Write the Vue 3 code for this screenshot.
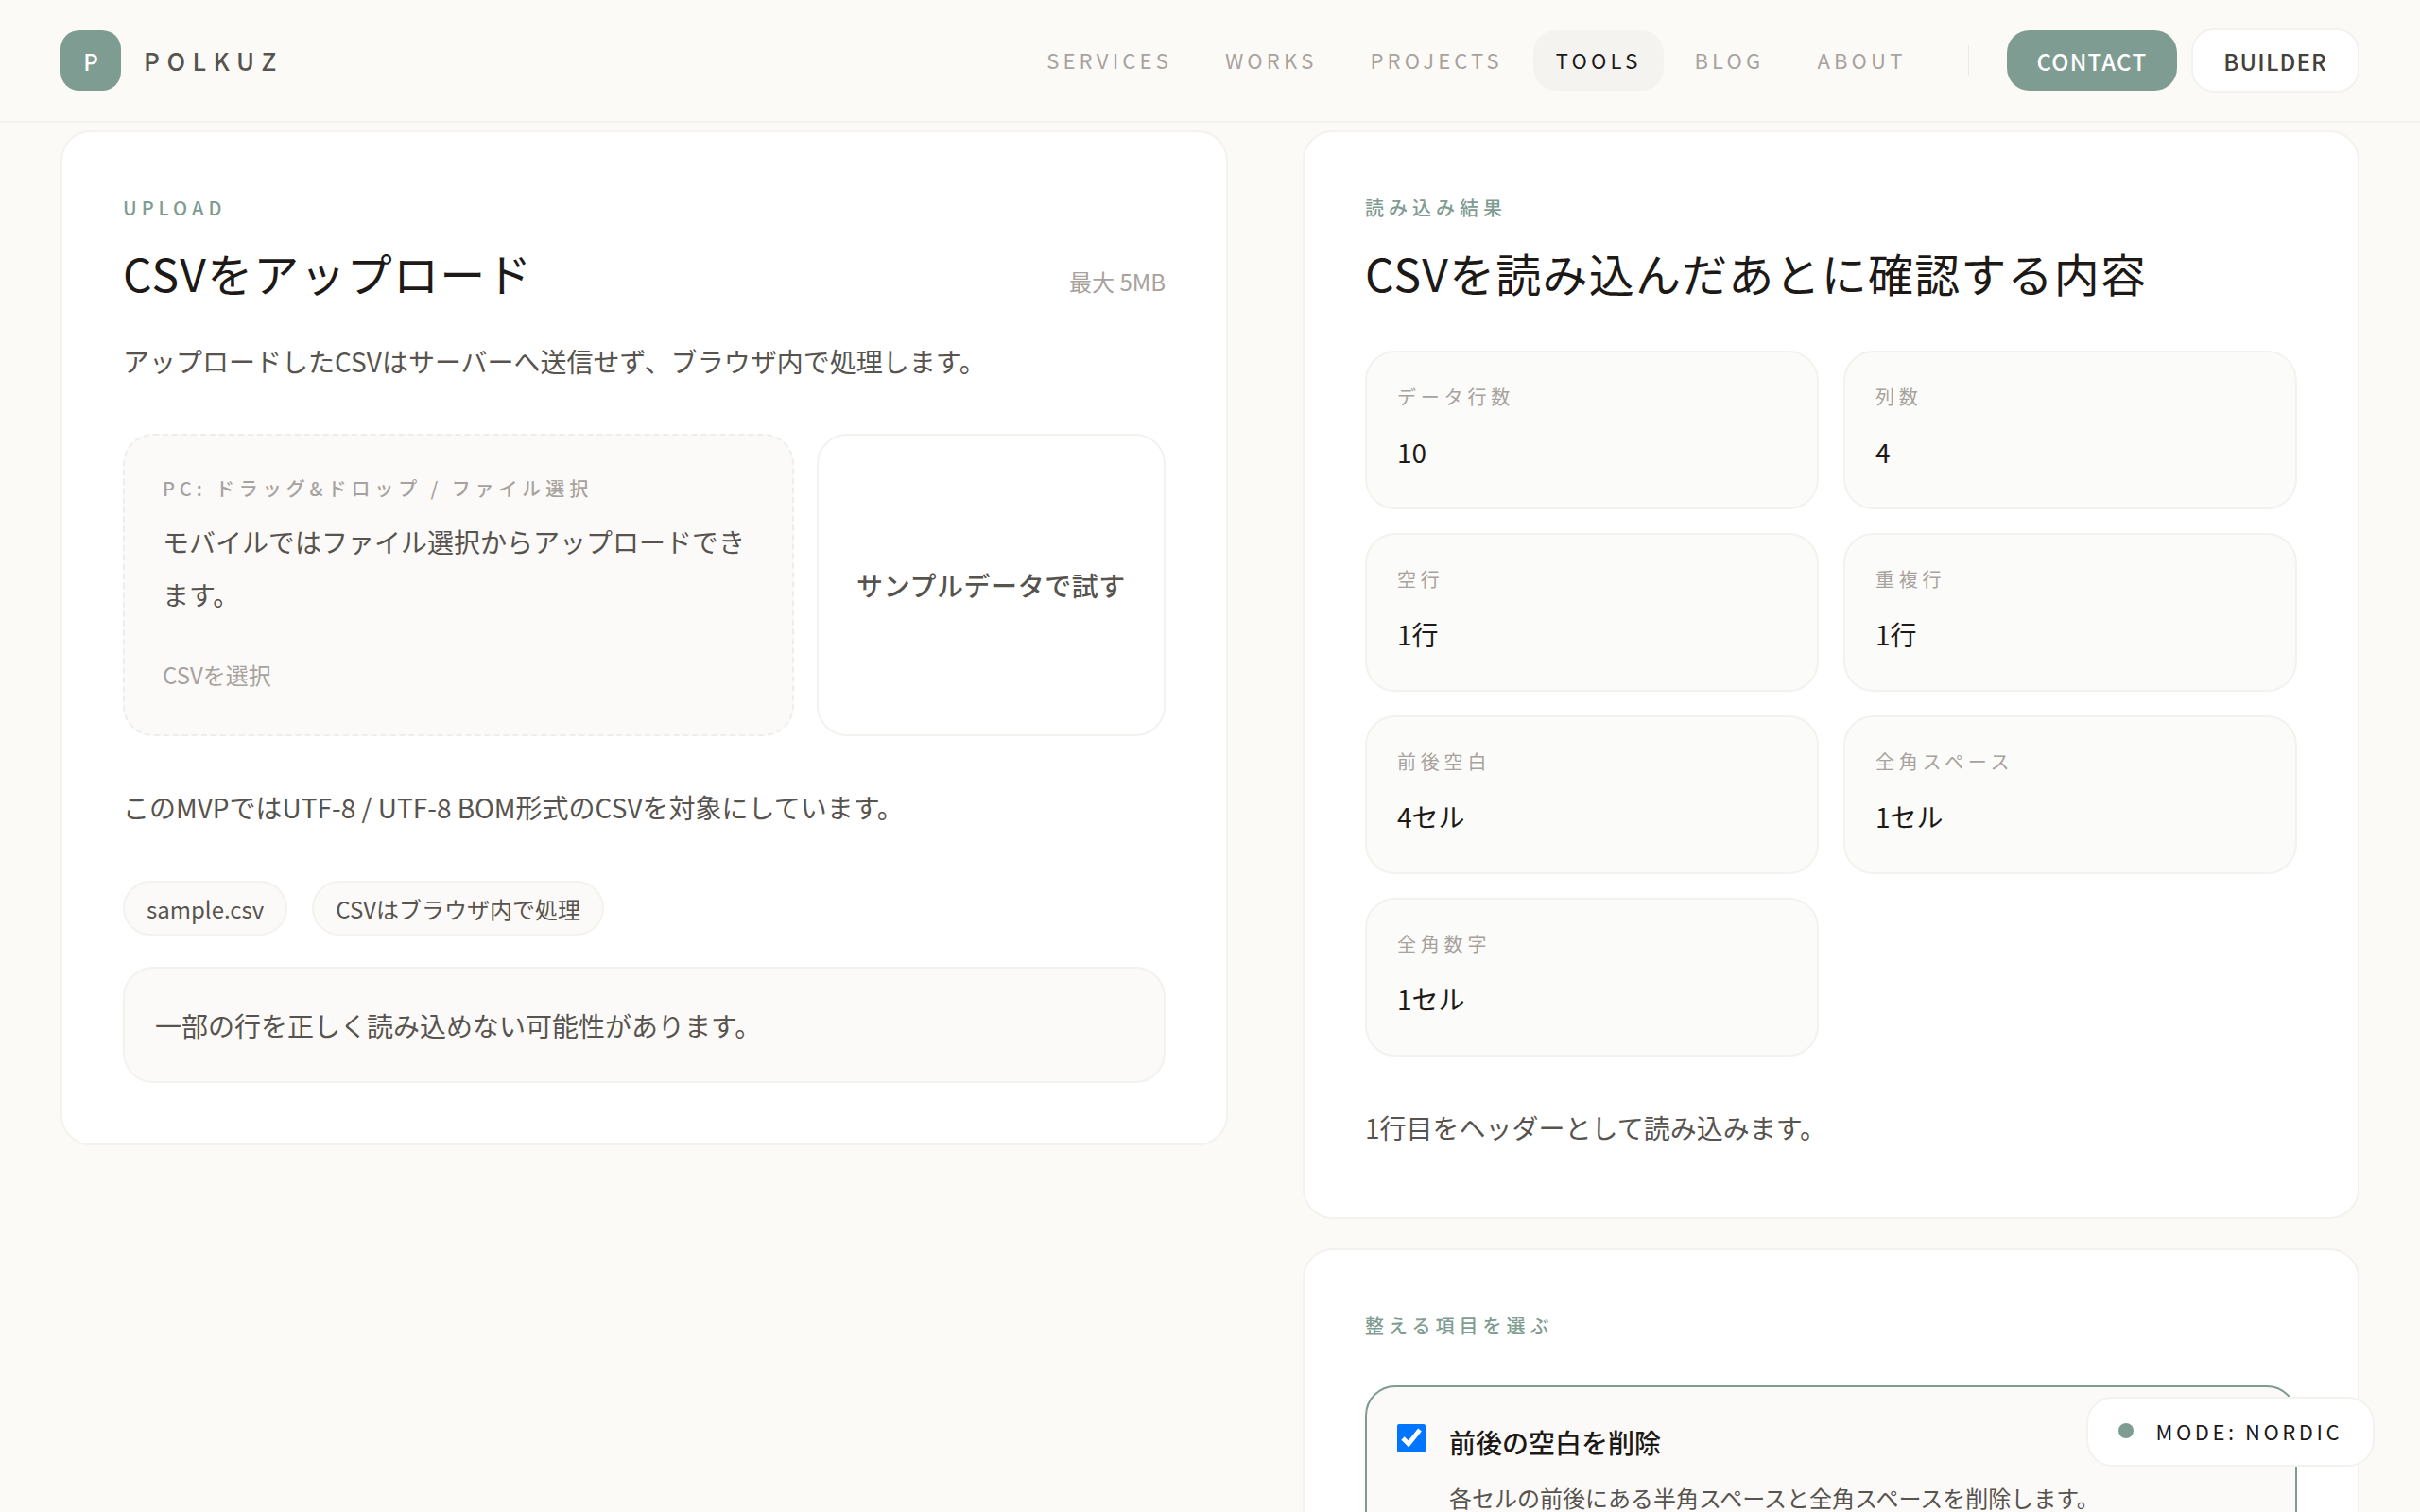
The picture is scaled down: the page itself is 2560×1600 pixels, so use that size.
<template>
  <div class="page">
    <header class="site-header">
      <div class="brand">
        <span class="brand-mark">P</span>
        <span class="brand-name">POLKUZ</span>
      </div>
      <div class="header-right">
        <nav class="nav">
          <a v-for="item in navItems" :key="item" class="nav-link" :class="{ active: item === 'TOOLS' }">{{ item }}</a>
        </nav>
        <span class="nav-divider"></span>
        <a class="btn btn-contact">CONTACT</a>
        <a class="btn btn-builder">BUILDER</a>
      </div>
    </header>

    <main class="layout">
      <section class="card upload-card">
        <p class="eyebrow">UPLOAD</p>
        <div class="title-row">
          <h2 class="card-title">CSVをアップロード</h2>
          <span class="limit">最大 5MB</span>
        </div>
        <p class="body-text lead">アップロードしたCSVはサーバーへ送信せず、ブラウザ内で処理します。</p>

        <div class="upload-row">
          <div class="dropzone">
            <p class="drop-label">PC: ドラッグ&amp;ドロップ / ファイル選択</p>
            <p class="drop-text">モバイルではファイル選択からアップロードできます。</p>
            <p class="drop-pick">CSVを選択</p>
          </div>
          <button class="sample-btn">サンプルデータで試す</button>
        </div>

        <p class="body-text encoding">このMVPではUTF-8 / UTF-8 BOM形式のCSVを対象にしています。</p>

        <div class="chips">
          <span class="chip">sample.csv</span>
          <span class="chip">CSVはブラウザ内で処理</span>
        </div>

        <div class="notice">一部の行を正しく読み込めない可能性があります。</div>
      </section>

      <div class="side">
        <section class="card">
          <p class="eyebrow">読み込み結果</p>
          <h2 class="card-title">CSVを読み込んだあとに確認する内容</h2>
          <div class="stats">
            <div v-for="stat in stats" :key="stat.label" class="stat">
              <p class="stat-label">{{ stat.label }}</p>
              <p class="stat-value">{{ stat.value }}</p>
            </div>
          </div>
          <p class="body-text header-note">1行目をヘッダーとして読み込みます。</p>
        </section>

        <section class="card options-card">
          <p class="eyebrow">整える項目を選ぶ</p>
          <label class="option">
            <input type="checkbox" checked />
            <span class="option-body">
              <span class="option-title">前後の空白を削除</span>
              <span class="option-desc">各セルの前後にある半角スペースと全角スペースを削除します。</span>
            </span>
          </label>
        </section>
      </div>
    </main>

    <div class="mode-badge">
      <span class="mode-dot"></span>
      <span>MODE: NORDIC</span>
    </div>
  </div>
</template>

<script setup>
const navItems = ['SERVICES', 'WORKS', 'PROJECTS', 'TOOLS', 'BLOG', 'ABOUT']

const stats = [
  { label: 'データ行数', value: '10' },
  { label: '列数', value: '4' },
  { label: '空行', value: '1行' },
  { label: '重複行', value: '1行' },
  { label: '前後空白', value: '4セル' },
  { label: '全角スペース', value: '1セル' },
  { label: '全角数字', value: '1セル' }
]
</script>

<style>
html,
body {
  margin: 0;
  background: #fbfaf7;
}
</style>

<style scoped>
.page {
  height: 1600px;
  overflow: hidden;
  background: #fbfaf7;
  color: #57534e;
  font-family: "Noto Sans CJK JP", "Noto Sans", sans-serif;
}

p,
h2 {
  margin: 0;
}

/* Header */
.site-header {
  height: 128px;
  padding: 0 64px;
  display: flex;
  align-items: center;
  justify-content: space-between;
  border-bottom: 2px solid #f3f2ef;
}

.brand {
  display: flex;
  align-items: center;
  gap: 24px;
}

.brand-mark {
  width: 64px;
  height: 64px;
  border-radius: 20px;
  background: #7f9c92;
  color: #fff;
  font-size: 24px;
  font-weight: 500;
  display: flex;
  align-items: center;
  justify-content: center;
}

.brand-name {
  padding-bottom: 2px;
  font-size: 26px;
  letter-spacing: 0.29em;
  font-weight: 500;
}

.header-right {
  display: flex;
  align-items: center;
}

.nav {
  display: flex;
  gap: 8px;
}

.nav-link {
  height: 64px;
  box-sizing: border-box;
  padding: 0 24px 2px;
  border-radius: 24px;
  display: flex;
  align-items: center;
  font-size: 22px;
  letter-spacing: 0.19em;
  color: #a8a29e;
}

.nav-link.active {
  background: #f4f3f0;
  color: #1c1917;
}

.nav-divider {
  width: 1px;
  height: 32px;
  background: #eceae6;
  margin: 0 40px 0 41px;
}

.btn {
  height: 64px;
  padding: 0 32px;
  box-sizing: border-box;
  border-radius: 24px;
  display: flex;
  align-items: center;
  font-size: 24px;
  font-weight: 500;
  letter-spacing: 0.05em;
}

.btn-contact {
  background: #7f9c92;
  color: #fff;
}

.btn-builder {
  height: 68px;
  margin-left: 15px;
  background: #fff;
  border: 2px solid #f3f2ef;
  color: #44403c;
}

/* Layout */
.layout {
  display: grid;
  grid-template-columns: 1235px 1118px;
  gap: 79px;
  padding: 8px 64px 0;
  align-items: start;
}

.side {
  display: flex;
  flex-direction: column;
  gap: 31px;
}

.card {
  background: #fff;
  border: 2px solid #f3f2ef;
  border-radius: 32px;
  padding: 64px;
}

.eyebrow {
  font-size: 20px;
  line-height: 32px;
  letter-spacing: 0.25em;
  font-weight: 500;
  color: #7f9c92;
}

.title-row {
  display: flex;
  align-items: flex-end;
  justify-content: space-between;
}

.card-title {
  margin-top: 16px;
  font-size: 48px;
  line-height: 72px;
  font-weight: 400;
  letter-spacing: 0.025em;
  color: #1c1917;
}

.limit {
  font-size: 24px;
  line-height: 40px;
  color: #a8a29e;
  margin-bottom: 6px;
}

.body-text {
  font-size: 28px;
  line-height: 46px;
}

.lead {
  margin-top: 35px;
}

/* Upload */
.upload-row {
  margin-top: 54px;
  display: grid;
  grid-template-columns: 710px 369px;
  gap: 24px;
}

.dropzone {
  height: 320px;
  box-sizing: border-box;
  padding: 40px;
  border: 2px dashed #efedea;
  border-radius: 32px;
  background: #fbfaf8;
}

.drop-label {
  font-size: 20px;
  line-height: 32px;
  letter-spacing: 0.245em;
  font-weight: 500;
  color: #a8a29e;
}

.drop-text {
  margin-top: 12px;
  font-size: 28px;
  line-height: 56px;
}

.drop-pick {
  margin-top: 37px;
  font-size: 24px;
  line-height: 40px;
  color: #a8a29e;
}

.sample-btn {
  background: #fff;
  border: 2px solid #f3f2ef;
  border-radius: 32px;
  font-family: inherit;
  font-size: 28px;
  font-weight: 500;
  letter-spacing: 0.02em;
  color: #57534e;
}

.encoding {
  margin-top: 52px;
}

.chips {
  margin-top: 55px;
  display: flex;
  gap: 26px;
}

.chip {
  height: 58px;
  box-sizing: border-box;
  padding: 0 23px;
  border: 2px solid #f3f2ef;
  border-radius: 29px;
  background: #fbfaf8;
  font-size: 24px;
  display: flex;
  align-items: center;
}

.notice {
  margin-top: 33px;
  height: 123px;
  box-sizing: border-box;
  padding: 0 32px;
  display: flex;
  align-items: center;
  border: 2px solid #f3f2ef;
  border-radius: 32px;
  background: #fbfaf8;
  font-size: 28px;
}

/* Stats */
.stats {
  margin-top: 47px;
  display: grid;
  grid-template-columns: repeat(2, 1fr);
  gap: 25px 26px;
}

.stat {
  height: 168px;
  box-sizing: border-box;
  padding: 31px 32px 0;
  border: 2px solid #f3f2ef;
  border-radius: 32px;
  background: #fbfbf9;
}

.stat-label {
  font-size: 20px;
  line-height: 32px;
  letter-spacing: 0.24em;
  color: #a8a29e;
}

.stat-value {
  margin-top: 20px;
  font-size: 28px;
  line-height: 44px;
  color: #1c1917;
}

.header-note {
  margin: 52px 0 8px;
}

/* Options */
.options-card {
  padding-bottom: 200px;
}

.option {
  margin-top: 47px;
  display: flex;
  gap: 25px;
  padding: 32px;
  border: 2px solid #7f9c92;
  border-radius: 32px;
  background: #fbfaf8;
}

.option input {
  width: 30px;
  height: 30px;
  margin: 7px 0 0;
  flex: none;
}

.option-body {
  display: flex;
  flex-direction: column;
  gap: 16px;
  padding-top: 3px;
}

.option-title {
  font-size: 28px;
  line-height: 46px;
  font-weight: 500;
  color: #1c1917;
}

.option-desc {
  font-size: 24px;
  line-height: 40px;
}

/* Mode badge */
.mode-badge {
  position: fixed;
  right: 48px;
  bottom: 48px;
  height: 74px;
  box-sizing: border-box;
  padding: 0 32px 2px;
  display: flex;
  align-items: center;
  gap: 24px;
  background: #fff;
  border: 2px solid #f3f2ef;
  border-radius: 28px;
  font-size: 22px;
  font-weight: 400;
  letter-spacing: 0.16em;
  color: #1c1917;
}

.mode-dot {
  width: 16px;
  height: 16px;
  border-radius: 50%;
  background: #7f9c92;
}
</style>
